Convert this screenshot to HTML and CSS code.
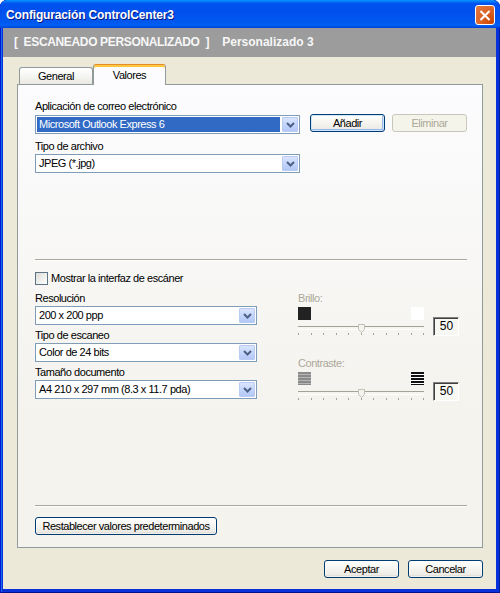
FILE: index.html
```html
<!DOCTYPE html>
<html lang="es">
<head>
<meta charset="utf-8">
<title>Configuración ControlCenter3</title>
<link rel="stylesheet" href="styles.css">
</head>
<body>
<div class="frame">
  <div class="titlebar">
    <span class="title">Configuración ControlCenter3</span>
    <div class="close" aria-label="Cerrar">
      <svg width="19" height="19" viewBox="0 0 19 19"><path d="M5.5 5.5 L13.5 13.5 M13.5 5.5 L5.5 13.5" stroke="#fff" stroke-width="2.2" stroke-linecap="square"/></svg>
    </div>
  </div>
  <div class="client">
    <div class="header"><span class="h-main">[&nbsp; ESCANEADO PERSONALIZADO &nbsp;]</span><span class="h-sub">Personalizado 3</span></div>
    <div class="tabs">
      <div class="tab">General</div>
      <div class="tab active">Valores</div>
    </div>
    <div class="panel">
      <div class="label l-first">Aplicación de correo electrónico</div>
      <div class="row">
        <div class="combo wide"><span class="val sel">Microsoft Outlook Express 6</span><span class="drop"><svg width="9" height="6" viewBox="0 0 9 6"><path d="M1 1 L4.5 4.5 L8 1" fill="none" stroke="#4d6185" stroke-width="2"/></svg></span></div>
        <button class="btn add">Añadir</button>
        <button class="btn del" disabled>Eliminar</button>
      </div>
      <div class="label l-second">Tipo de archivo</div>
      <div class="combo wide"><span class="val">JPEG (*.jpg)</span><span class="drop"><svg width="9" height="6" viewBox="0 0 9 6"><path d="M1 1 L4.5 4.5 L8 1" fill="none" stroke="#4d6185" stroke-width="2"/></svg></span></div>

      <div class="sep sep-top"></div>

      <div class="check"><span class="box"></span><span>Mostrar la interfaz de escáner</span></div>

      <div class="cols">
        <div class="left">
          <div class="group">
            <div class="label">Resolución</div>
            <div class="combo narrow"><span class="val">200 x 200 ppp</span><span class="drop"><svg width="9" height="6" viewBox="0 0 9 6"><path d="M1 1 L4.5 4.5 L8 1" fill="none" stroke="#4d6185" stroke-width="2"/></svg></span></div>
          </div>
          <div class="group">
            <div class="label">Tipo de escaneo</div>
            <div class="combo narrow"><span class="val">Color de 24 bits</span><span class="drop"><svg width="9" height="6" viewBox="0 0 9 6"><path d="M1 1 L4.5 4.5 L8 1" fill="none" stroke="#4d6185" stroke-width="2"/></svg></span></div>
          </div>
          <div class="group">
            <div class="label">Tamaño documento</div>
            <div class="combo narrow"><span class="val">A4 210 x 297 mm (8.3 x 11.7 pda)</span><span class="drop"><svg width="9" height="6" viewBox="0 0 9 6"><path d="M1 1 L4.5 4.5 L8 1" fill="none" stroke="#4d6185" stroke-width="2"/></svg></span></div>
          </div>
        </div>
        <div class="right">
          <div class="sgroup">
            <div class="label dis">Brillo:</div>
            <div class="srow">
              <div class="slider">
                <div class="icons">
                  <span class="sq dark"></span>
                  <span class="sq light"></span>
                </div>
                <div class="track"><span class="thumb"><svg width="7" height="9" viewBox="0 0 7 9"><path d="M0.5 0.5 H6.5 V5.5 L3.5 8.5 L0.5 5.5 Z" fill="#f4f3ee" stroke="#c2c0b5"/></svg></span></div>
                <div class="ticks"><i></i><i></i><i></i><i></i><i></i><i></i><i></i><i></i><i></i><i></i><i></i></div>
              </div>
              <div class="valbox">50</div>
            </div>
          </div>
          <div class="sgroup second">
            <div class="label dis">Contraste:</div>
            <div class="srow">
              <div class="slider">
                <div class="icons">
                  <span class="stripes gray"></span>
                  <span class="stripes black"></span>
                </div>
                <div class="track"><span class="thumb"><svg width="7" height="9" viewBox="0 0 7 9"><path d="M0.5 0.5 H6.5 V5.5 L3.5 8.5 L0.5 5.5 Z" fill="#f4f3ee" stroke="#c2c0b5"/></svg></span></div>
                <div class="ticks"><i></i><i></i><i></i><i></i><i></i><i></i><i></i><i></i><i></i><i></i><i></i></div>
              </div>
              <div class="valbox">50</div>
            </div>
          </div>
        </div>
      </div>

      <div class="sep sep-bottom"></div>
      <div class="reset-row"><button class="btn reset">Restablecer valores predeterminados</button></div>
    </div>
    <div class="footer">
      <button class="btn ok">Aceptar</button>
      <button class="btn cancel">Cancelar</button>
    </div>
  </div>
</div>
</body>
</html>
```

FILE: styles.css
```css
* { box-sizing: border-box; }
html, body { margin: 0; padding: 0; }
body {
  width: 500px;
  height: 593px;
  overflow: hidden;
  font-family: "Liberation Sans", Arial, sans-serif;
  font-size: 11px;
  letter-spacing: -0.45px;
  color: #000;
  background: #fff;
}
.frame {
  width: 500px;
  height: 593px;
  display: flex;
  flex-direction: column;
  background: #0831d9;
  border-radius: 7px 7px 0 0;
  box-shadow: inset 1px 0 0 #0019cf, inset -1px 0 0 #001ea0, inset 0 -1px 0 #001090, inset 2px 0 0 #166aee;
  overflow: hidden;
}
.titlebar {
  height: 28px;
  flex: none;
  display: flex;
  justify-content: space-between;
  align-items: flex-start;
  padding: 0 5px 0 6px;
  background: linear-gradient(180deg, #0997ff 0, #0053ee 12%, #0050ee 40%, #0058ee 80%, #0060f5 90%, #0050e0 96%, #003dd7 100%);
  border-radius: 7px 7px 0 0;
}
.title {
  font-family: "Liberation Sans", Arial, sans-serif;
  font-weight: bold;
  font-size: 12px;
  color: #fff;
  line-height: 16px;
  margin-top: 7px;
  letter-spacing: -0.15px;
  text-shadow: 1px 1px 0 #0a1883;
}
.close {
  margin-top: 5px;
  width: 20px;
  height: 20px;
  border: 1px solid #fff;
  border-radius: 3px;
  background: radial-gradient(circle at 90% 90%, #cc4600 0, #dc6527 55%, #e27b45 100%);
  display: flex;
  align-items: center;
  justify-content: center;
}
.close svg { display: block; }
.client {
  flex: 1;
  margin: 0 4px 4px 3px;
  background: #ece9d8;
  display: flex;
  flex-direction: column;
}
.header {
  height: 29px;
  flex: none;
  background: #9c9c9c;
  color: #f7f7f7;
  font-weight: bold;
  font-size: 12px;
  letter-spacing: 0;
  display: flex;
  align-items: center;
  padding: 0 0 1px 11px;
}
.h-main { letter-spacing: -0.35px; }
.h-sub { margin-left: 13px; }
.tabs {
  margin: 7px 0 0 16px;
  height: 20px;
  display: flex;
  align-items: flex-end;
  position: relative;
  z-index: 2;
}
.tab {
  width: 74px;
  height: 17px;
  border: 1px solid #919b9c;
  border-bottom: none;
  border-radius: 3px 3px 0 0;
  background: linear-gradient(#fff, #f3f3ef 60%, #e9e8e1);
  text-align: center;
  line-height: 17px;
}
.tab.active {
  width: 73px;
  height: 21px;
  margin-bottom: -1px;
  background: #fcfcfe;
  border-top: 1px solid #e68b2c;
  box-shadow: inset 0 2px 0 #ffc73c;
  line-height: 18px;
  padding-top: 1px;
}
.panel {
  margin-left: 14px;
  width: 466px;
  height: 464px;
  border: 1px solid #919b9c;
  background: linear-gradient(#fcfcfe, #f4f3ee 70%, #f4f3ee);
  display: flex;
  flex-direction: column;
  padding: 0 15px 0 17px;
}
.label {
  line-height: 13px;
  height: 13px;
  white-space: nowrap;
}
.label.dis { color: #aca899; }
.l-first { margin-top: 15px; margin-bottom: 2px; }
.l-second { margin-top: 6px; margin-bottom: 1px; }
.row { display: flex; align-items: flex-start; }
.combo {
  height: 19px;
  border: 1px solid #7f9db9;
  background: #fff;
  display: flex;
  align-items: stretch;
  padding: 1px;
}
.combo.wide { width: 265px; }
.combo.narrow { width: 222px; }
.val {
  flex: 1;
  padding-left: 2px;
  line-height: 15px;
  white-space: nowrap;
  overflow: hidden;
}
.val.sel { background: #316ac5; color: #fff; }
.drop {
  width: 16px;
  margin-left: 2px;
  border: 1px solid #b9cbf3;
  border-radius: 1px;
  background: linear-gradient(#d9e4fd, #c1d3fb 60%, #b4c8f6);
  display: flex;
  align-items: center;
  justify-content: center;
}
.drop svg { display: block; }
.btn {
  font-family: "Liberation Sans", Arial, sans-serif;
  font-size: 11px;
  letter-spacing: -0.45px;
  white-space: nowrap;
  color: #000;
  width: 75px;
  height: 18px;
  padding: 0;
  border: 1px solid #003c74;
  border-radius: 3px;
  background: linear-gradient(#fff, #f5f4ef 50%, #ecebe5 85%, #d6d0c5);
  box-shadow: inset 0 0 0 1px rgba(255,255,255,0.6);
  line-height: 15px;
}
.btn.add {
  margin-left: 10px;
  margin-top: -1px;
  box-shadow: inset 0 0 0 1px #cee7ff, inset -1px -1px 0 1px #98b8ea;
}
.btn.del {
  margin-left: 7px;
  margin-top: -1px;
  border-color: #c9c7ba;
  background: #f5f4ea;
  color: #aca899;
  box-shadow: none;
}
.sep {
  height: 2px;
  border-top: 1px solid #aca899;
  border-bottom: 1px solid #fff;
}
.sep-top { margin-top: 86px; }
.check {
  margin-top: 11px;
  height: 13px;
  display: flex;
  align-items: center;
  line-height: 13px;
}
.box {
  width: 13px;
  height: 13px;
  border: 1px solid #5f7286;
  background: linear-gradient(135deg, #dcdcd7, #fff);
  margin-right: 3px;
  flex: none;
}
.cols {
  margin-top: 7px;
  display: flex;
  gap: 41px;
}
.left { width: 222px; }
.group + .group { margin-top: 4px; }
.group .label { margin-bottom: 1px; }
.right { width: 161px; }
.sgroup.second { margin-top: 21px; }
.srow {
  display: flex;
  align-items: flex-start;
  margin-top: 2px;
}
.slider { width: 126px; }
.icons {
  height: 13px;
  display: flex;
  justify-content: space-between;
}
.sq { width: 13px; height: 13px; }
.sq.dark { background: #222; }
.sq.light { background: #fff; }
.stripes { width: 13px; height: 13px; }
.stripes.gray {
  background: repeating-linear-gradient(#8a8a8a 0, #8a8a8a 2px, #b5b5b5 2px, #b5b5b5 3px);
}
.stripes.black {
  background: repeating-linear-gradient(#111 0, #111 2px, #fff 2px, #fff 3px);
}
.track {
  position: relative;
  height: 8px;
  margin-top: 4px;
}
.track::before {
  content: "";
  position: absolute;
  left: 0;
  right: 0;
  top: 2px;
  height: 2px;
  border-top: 1px solid #a5a398;
  border-bottom: 1px solid #fff;
}
.thumb {
  position: absolute;
  left: 60px;
  top: 0;
}
.thumb svg { display: block; }
.ticks {
  margin-top: 1px;
  height: 2px;
  display: flex;
  justify-content: space-between;
}
.ticks i {
  width: 1px;
  height: 2px;
  background: #a5a398;
}
.valbox {
  margin-left: 9px;
  margin-top: 10px;
  width: 26px;
  height: 19px;
  border-top: 1px solid #808080;
  border-left: 1px solid #808080;
  border-right: 1px solid #fff;
  border-bottom: 1px solid #fff;
  box-shadow: inset 1px 1px 0 #404040;
  background: #f7f7f4;
  font-size: 12px;
  letter-spacing: 0;
  line-height: 16px;
  text-align: center;
  padding-left: 1px;
}
.sep-bottom { margin-top: auto; }
.reset-row { margin-top: 10px; margin-bottom: 12px; }
.btn.reset { width: 182px; }
.footer {
  display: flex;
  justify-content: flex-end;
  gap: 9px;
  padding-right: 13px;
  margin-top: 12px;
}
```
